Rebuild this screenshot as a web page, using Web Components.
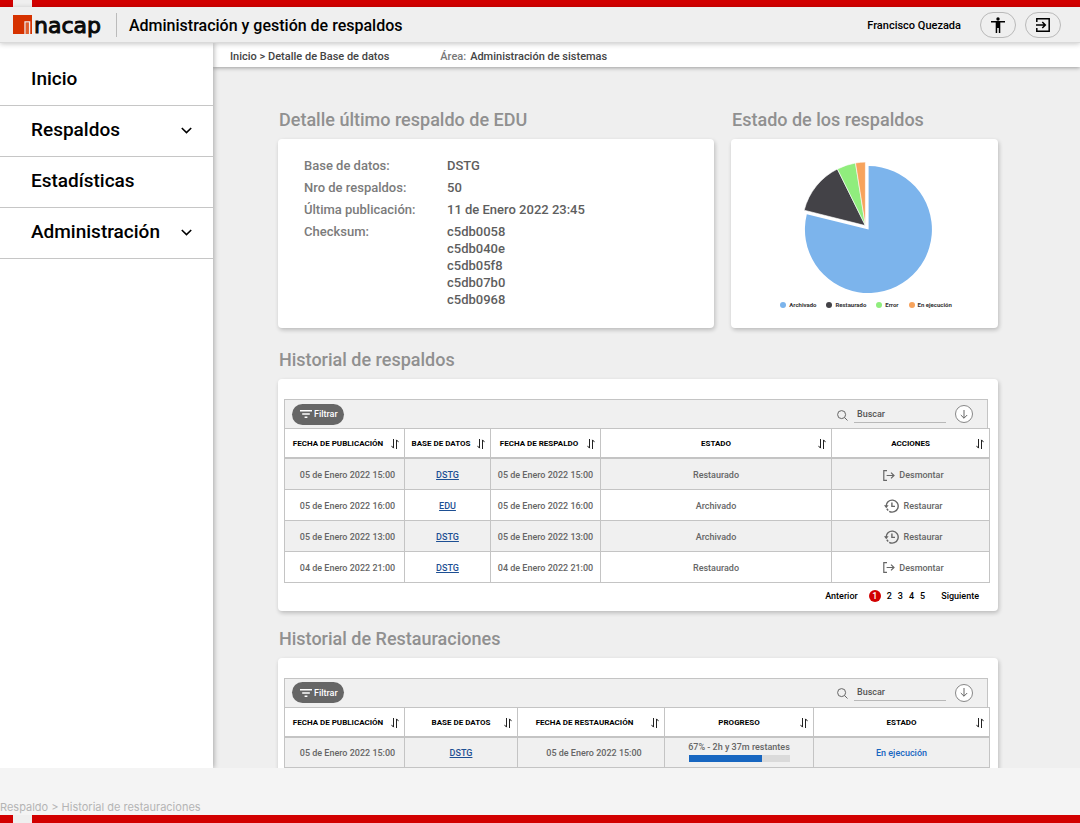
<!DOCTYPE html>
<html lang="es">
<head>
<meta charset="utf-8">
<meta name="viewport" content="width=device-width, initial-scale=1">
<title>Administración y gestión de respaldos</title>
<style>
  html, body { height: 100%; }
  body {
    margin: 0;
    font: 500 11px/16px Roboto, "Noto Sans", sans-serif;
    color: #000;
    --red: #d20000;
    --paper: #efefef;
    --line: #c4c4c4;
    --muted: #666;
  }
</style>
</head>
<body>
<backup-app></backup-app>

<template id="t-app">
  <style>
    :host { display: flex; flex-direction: column; height: 100vh; background: #f4f4f4; overflow: hidden; }
    .body { display: flex; flex: 1; min-height: 0; background: var(--paper); overflow: hidden; }
    main { flex: 1; min-width: 0; display: flex; flex-direction: column; }
    .scroll { flex: 1; min-height: 0; overflow-y: auto; scrollbar-width: none; padding: 40px 82px 0 65px; }
    .top { display: grid; grid-template-columns: 436fr 267fr; gap: 17px; margin-bottom: 19px; }
    panel-section + panel-section.list { margin-top: 15px; }
    footer { display: flex; align-items: flex-end; height: 47px; font: 400 11px/16px Inter, sans-serif; color: #b4b4b4; }
    .last { height: 8px; }
  </style>
  <brand-stripe></brand-stripe>
  <app-header></app-header>
  <div class="body">
    <side-menu></side-menu>
    <main>
      <crumb-bar></crumb-bar>
      <div class="scroll">
        <div class="top">
          <panel-section heading="Detalle último respaldo de EDU"><backup-detail></backup-detail></panel-section>
          <panel-section heading="Estado de los respaldos"><status-pie></status-pie></panel-section>
        </div>
        <panel-section class="list" heading="Historial de respaldos">
          <history-table kind="respaldos"></history-table>
        </panel-section>
        <panel-section class="list" heading="Historial de Restauraciones">
          <history-table kind="restauraciones"></history-table>
        </panel-section>
      </div>
    </main>
  </div>
  <footer>Respaldo &gt; Historial de restauraciones</footer>
  <brand-stripe class="last"></brand-stripe>
</template>

<template id="t-stripe">
  <style>
    :host { display: block; height: 7px; flex: none;
      background: linear-gradient(90deg, var(--red) 13px, var(--paper) 13px 32px, var(--red) 32px); }
  </style>
</template>

<template id="t-header">
  <style>
    :host { display: flex; align-items: center; height: 35px; flex: none; padding: 0 19px 0 13px; background: var(--paper);
      border-bottom: 1px solid #dadada; box-shadow: 0 1px 5px rgba(0,0,0,.22); position: relative; z-index: 3; }
    .logo { display: flex; align-items: center; color: #0a0a0a; text-decoration: none; }
    .logo svg { display: block; }
    .logo span { padding-top: 2px; font: 400 22px/24px "DejaVu Sans", sans-serif; -webkit-text-stroke: 1px currentColor; margin-left: 2px; }
    h1 { margin: 0 auto 0 15px; padding: 2px 0 0 12px; border-left: 1px solid #bbb; font-size: 16px; line-height: 22px; font-weight: 500; }
    .user { margin-right: 19px; padding-top: 2px; }
    button { display: flex; align-items: center; justify-content: center; width: 36px; height: 26px; padding: 0;
      border: 1px solid #b9b9b9; border-radius: 13px; background: none; }
    button + button { margin-left: 9px; }
  </style>
  <a class="logo" href="#" aria-label="Inacap">
    <svg width="19" height="19" viewBox="0 0 19 19"><path fill="#d63200" d="M0 0h19v19H0z"/><path fill="#e0602f" d="M13 8h3v11h-3z"/><path fill="none" stroke="#efefef" stroke-width="1.3" d="M12 19V6.8h4.6V19"/></svg>
    <span>nacap</span>
  </a>
  <h1>Administración y gestión de respaldos</h1>
  <span class="user">Francisco Quezada</span>
  <button type="button" aria-label="Accesibilidad">
    <svg width="14" height="16" viewBox="0 0 14 16"><circle cx="7" cy="2" r="1.7"/><path d="M0 4h14v1.6H9.3V16H7.8v-5H6.2v5H4.7V5.6H0z"/></svg>
  </button>
  <button type="button" aria-label="Salir">
    <svg width="14" height="14" viewBox="0 0 14 14" fill="none" stroke="#000" stroke-width="1.5"><path d="M.8 4V.8h12.4v12.4H.8V10M0 7h9M6.3 4l3 3-3 3"/></svg>
  </button>
</template>

<template id="t-menu">
  <style>
    :host { display: block; width: 213px; flex: none; background: #fff; box-shadow: 1px 0 5px rgba(0,0,0,.3);
      position: relative; z-index: 2; }
    nav { padding-top: 12px; }
    a { display: flex; align-items: center; justify-content: space-between; height: 48px; padding: 0 21px 2px 31px;
      border-bottom: 1px solid #c6c6c6; color: #000; text-decoration: none; font-size: 19px; line-height: 24px; }
  </style>
  <nav></nav>
</template>

<template id="t-crumbs">
  <style>
    :host { display: flex; align-items: center; gap: 51px; height: 20px; flex: none; padding: 4px 17px 0; background: #fff;
      color: #444; box-shadow: 0 1px 4px rgba(0,0,0,.35); position: relative; z-index: 1; }
    a { color: inherit; text-decoration: none; }
    .area { display: flex; gap: 4px; }
    .area span { color: #777; }
    b { font-weight: 500; }
  </style>
  <nav aria-label="Ruta"><a href="#">Inicio</a> &gt; <a href="#">Detalle de Base de datos</a></nav>
  <div class="area"><span>Área:</span><b>Administración de sistemas</b></div>
</template>

<template id="t-panel">
  <style>
    :host { display: block; min-width: 0; }
    h2 { margin: 0 0 7px; padding: 1px 0 0 1px; font-size: 18px; line-height: 24px; font-weight: 500; color: #909090; }
    .card { background: #fff; border-radius: 4px; box-shadow: 1px 2px 4px rgba(0,0,0,.22); }
  </style>
  <h2></h2>
  <div class="card"><slot></slot></div>
</template>

<template id="t-detail">
  <style>
    :host { display: block; height: 189px; box-sizing: border-box; padding: 18px 26px; }
    dl { display: grid; grid-template-columns: 138px 1fr; gap: 5px; margin: 0; font-size: 13px; line-height: 17px; }
    dt { color: #7b7b7b; }
    dd { margin: 0; color: #5e5e5e; }
  </style>
  <dl>
    <dt>Base de datos:</dt><dd>DSTG</dd>
    <dt>Nro de respaldos:</dt><dd>50</dd>
    <dt>Última publicación:</dt><dd>11 de Enero 2022 23:45</dd>
    <dt>Checksum:</dt><dd>c5db0058<br>c5db040e<br>c5db05f8<br>c5db07b0<br>c5db0968</dd>
  </dl>
</template>

<template id="t-pie">
  <style>
    :host { display: flex; flex-direction: column; align-items: center; gap: 6px; height: 189px; box-sizing: border-box; padding-top: 22px; }
    svg { display: block; flex: none; }
    ul { display: flex; gap: 10px; margin: 0; padding: 0 0 0 3px; list-style: none; font-size: 6px; line-height: 10px; font-weight: 700; color: #333; }
    li { display: flex; align-items: center; gap: 3px; }
    i { width: 6px; height: 6px; border-radius: 50%; background: var(--c); }
  </style>
  <svg width="135" height="133" viewBox="797 161 135 133" role="img" aria-label="Estado de los respaldos">
    <path fill="#7cb4ec" d="M868.6 229.5V166a63.5 63.5 0 1 1-61.8 48.2z"/>
    <g stroke="#fff" stroke-width=".6">
      <path fill="#434247" d="M865.4 225.6l-61.2-15.4A63.6 63.6 0 0 1 837.4 169z"/>
      <path fill="#90ed7d" d="M865.4 225.6l-28-56.6a63.6 63.6 0 0 1 18.1-6z"/>
      <path fill="#f7a35c" d="M865.4 225.6l-9.9-62.6a63.6 63.6 0 0 1 9.9-.9z"/>
    </g>
  </svg>
  <ul>
    <li><i style="--c:#7cb4ec"></i>Archivado</li>
    <li><i style="--c:#434247"></i>Restaurado</li>
    <li><i style="--c:#90ed7d"></i>Error</li>
    <li><i style="--c:#f7a35c"></i>En ejecución</li>
  </ul>
</template>

<template id="t-table">
  <style>
    :host { display: block; padding: 20px 10px 7px 6px; font-size: 9px; line-height: 12px; color: var(--muted); }
    .bar { display: flex; align-items: center; height: 28px; padding: 0 14px 0 7px; border: 1px solid var(--line); border-bottom: 0; background: #f0f0f0; }
    .filter { display: flex; align-items: center; gap: 2px; height: 21px; padding: 0 6px 0 8px; margin-right: auto; border: 0; border-radius: 11px;
      background: #666; color: #fff; font: inherit; }
    .bar label { display: flex; margin-right: 6px; padding-top: 2px; }
    input { width: 92px; height: 17px; box-sizing: border-box; padding: 0 3px; border: 0; border-bottom: 1px solid #b8b8b8; border-radius: 0; background: none; font: inherit; color: #555; outline: none; }
    input::placeholder { color: #555; opacity: 1; }
    .down { display: flex; align-items: center; justify-content: center; width: 18px; height: 18px; margin-left: 9px; padding: 0;
      border: 1px solid #888; border-radius: 50%; background: #fff; }
    table { width: 100%; table-layout: fixed; border-collapse: collapse; }
    th, td { padding: 0; border: 1px solid var(--line); text-align: center; font-weight: 500; }
    th { height: 28px; border-bottom: 2px solid var(--line); color: #000; font-size: 8px; font-weight: 700; }
    th div { display: flex; align-items: center; padding: 2px 5px 0 0; white-space: nowrap; }
    th span { flex: 1; }
    th.wide div { padding-left: 13px; }
    td { box-sizing: border-box; height: 31px; padding-top: 2px; }
    td.shift { padding-left: 6px; }
    td.progress { padding: 0 0 2px; }
    tbody tr:nth-child(odd) { background: #f0f0f0; }
    td a { color: #1d4f93; text-decoration: underline; }
    td a.state { color: #1766c0; text-decoration: none; }
    .act { display: inline-flex; align-items: center; gap: 4px; padding: 0; border: 0; background: none; font: inherit; color: inherit; vertical-align: middle; }
    .act svg { display: block; }
    progress { display: block; width: 101px; height: 7px; margin: 2px auto 0; border: 0; appearance: none; background: #dadada; }
    progress::-webkit-progress-bar { background: #dadada; }
    progress::-webkit-progress-value { background: #1766c0; }
    .pages { display: flex; justify-content: flex-end; align-items: center; gap: 6px; height: 12px; padding: 7px 9px 2px 0; }
    .pages a { color: #000; text-decoration: none; }
    .pages .on { width: 12px; height: 12px; border-radius: 50%; background: var(--red); color: #fff; text-align: center; }
    .pages .prev { margin-right: 5px; }
    .pages .next { margin-left: 10px; }
  </style>
  <div class="bar">
    <button class="filter" type="button">
      <svg width="12" height="8" viewBox="0 0 12 8"><path stroke="#fff" stroke-width="1.4" d="M0 .8h12M2.2 4h7.6M4.6 7.2h2.8"/></svg>Filtrar
    </button>
    <label for="q" aria-label="Buscar"><svg width="11" height="11" viewBox="0 0 11 11" fill="none" stroke="#666"><circle cx="4.6" cy="4.6" r="4"/><path d="M7.5 7.5l3 3"/></svg></label>
    <input id="q" type="text" placeholder="Buscar">
    <button class="down" type="button" aria-label="Descargar">
      <svg width="8" height="9" viewBox="0 0 8 9" fill="none" stroke="#666"><path d="M4 0v8.2M.8 5L4 8.2 7.2 5"/></svg>
    </button>
  </div>
  <table><colgroup></colgroup><thead><tr></tr></thead><tbody></tbody></table>
</template>

<script>
const stamp = id => document.getElementById(id).content.cloneNode(true);

class Base extends HTMLElement {
  constructor() {
    super();
    this.attachShadow({ mode: 'open' }).append(stamp(this.constructor.template));
  }
  $(selector) { return this.shadowRoot.querySelector(selector); }
}

class BrandStripe extends Base { static template = 't-stripe'; }
class AppHeader extends Base { static template = 't-header'; }
class CrumbBar extends Base { static template = 't-crumbs'; }
class BackupDetail extends Base { static template = 't-detail'; }
class StatusPie extends Base { static template = 't-pie'; }
class BackupApp extends Base { static template = 't-app'; }

class SideMenu extends Base {
  static template = 't-menu';
  connectedCallback() {
    const chevron = '<svg width="11" height="7" viewBox="0 0 11 7" fill="none" stroke="#000" stroke-width="1.6"><path d="M.8 1l4.7 4.6L10.2 1"/></svg>';
    const items = [['Inicio'], ['Respaldos', true], ['Estadísticas'], ['Administración', true]];
    this.$('nav').innerHTML = items.map(([label, open]) =>
      `<a href="#"><span>${label}</span>${open ? chevron : ''}</a>`).join('');
  }
}

class PanelSection extends Base {
  static template = 't-panel';
  connectedCallback() { this.$('h2').textContent = this.getAttribute('heading'); }
}

const SORT = '<svg width="8" height="10" viewBox="0 0 8 10" fill="none" stroke="#222"><path d="M2.5 0v9M.4 6.8l2.1 2.4M5.5 10V1M7.6 3.2L5.5.8"/></svg>';
const EXIT = '<svg width="12" height="11" viewBox="0 0 12 11" fill="none" stroke="#666" stroke-width="1.2"><path d="M4 .6H.8v9.8H4M3.6 5.5h7.4M8 2.6l3 2.9-3 2.9"/></svg>';
const CLOCK = '<svg width="15" height="14" viewBox="0 0 15 14" fill="none" stroke="#666" stroke-width="1.4"><path d="M2.2 7.6A6 6 0 1 1 5.2 12.3M7.9 3.6V7.4H11M2.8 9.8l1.4 1.7"/><path fill="#666" stroke="none" d="M0 6.2h4.6L2.3 9.2z"/></svg>';

const link = text => `<a href="#">${text}</a>`;
const unmount = `<button class="act" type="button">${EXIT}Desmontar</button>`;
const restore = `<button class="act" type="button">${CLOCK}Restaurar</button>`;

const TABLES = {
  respaldos: {
    cols: [120, 86, 110, 231, 158],
    heads: ['FECHA DE PUBLICACIÓN', 'BASE DE DATOS', 'FECHA DE RESPALDO', 'ESTADO', 'ACCIONES'],
    wide: [3, 4],
    classes: { 0: 'shift', 4: 'shift' },
    rows: [
      ['05 de Enero 2022 15:00', link('DSTG'), '05 de Enero 2022 15:00', 'Restaurado', unmount],
      ['05 de Enero 2022 16:00', link('EDU'), '05 de Enero 2022 16:00', 'Archivado', restore],
      ['05 de Enero 2022 13:00', link('DSTG'), '05 de Enero 2022 13:00', 'Archivado', restore],
      ['04 de Enero 2022 21:00', link('DSTG'), '04 de Enero 2022 21:00', 'Restaurado', unmount]
    ],
    paged: true
  },
  restauraciones: {
    cols: [120, 113, 147, 149, 176],
    heads: ['FECHA DE PUBLICACIÓN', 'BASE DE DATOS', 'FECHA DE RESTAURACIÓN', 'PROGRESO', 'ESTADO'],
    wide: [1, 3, 4],
    classes: { 0: 'shift', 2: 'shift', 3: 'progress' },
    rows: [
      ['05 de Enero 2022 15:00', link('DSTG'), '05 de Enero 2022 15:00',
        '<label for="p">67% - 2h y 37m restantes</label><progress id="p" max="100" value="73"></progress>',
        '<a class="state" href="#">En ejecución</a>']
    ]
  }
};

class HistoryTable extends Base {
  static template = 't-table';
  connectedCallback() {
    const t = TABLES[this.getAttribute('kind')];
    this.$('colgroup').innerHTML = t.cols.map(w => `<col style="width:${w}px">`).join('');
    this.$('thead tr').innerHTML = t.heads.map((h, i) =>
      `<th scope="col"${t.wide.includes(i) ? ' class="wide"' : ''}><div><span>${h}</span>${SORT}</div></th>`).join('');
    this.$('tbody').innerHTML = t.rows.map(r => '<tr>' + r.map((c, i) =>
      `<td class="${t.classes[i] || ''}">${c}</td>`).join('') + '</tr>').join('');
    if (t.paged) {
      const nav = document.createElement('nav');
      nav.className = 'pages';
      nav.innerHTML = '<a class="prev" href="#">Anterior</a><a class="on" href="#" aria-current="page">1</a>' +
        [2, 3, 4, 5].map(link).join('') + '<a class="next" href="#">Siguiente</a>';
      this.shadowRoot.append(nav);
    }
  }
}

customElements.define('brand-stripe', BrandStripe);
customElements.define('app-header', AppHeader);
customElements.define('side-menu', SideMenu);
customElements.define('crumb-bar', CrumbBar);
customElements.define('panel-section', PanelSection);
customElements.define('backup-detail', BackupDetail);
customElements.define('status-pie', StatusPie);
customElements.define('history-table', HistoryTable);
customElements.define('backup-app', BackupApp);
</script>
</body>
</html>
